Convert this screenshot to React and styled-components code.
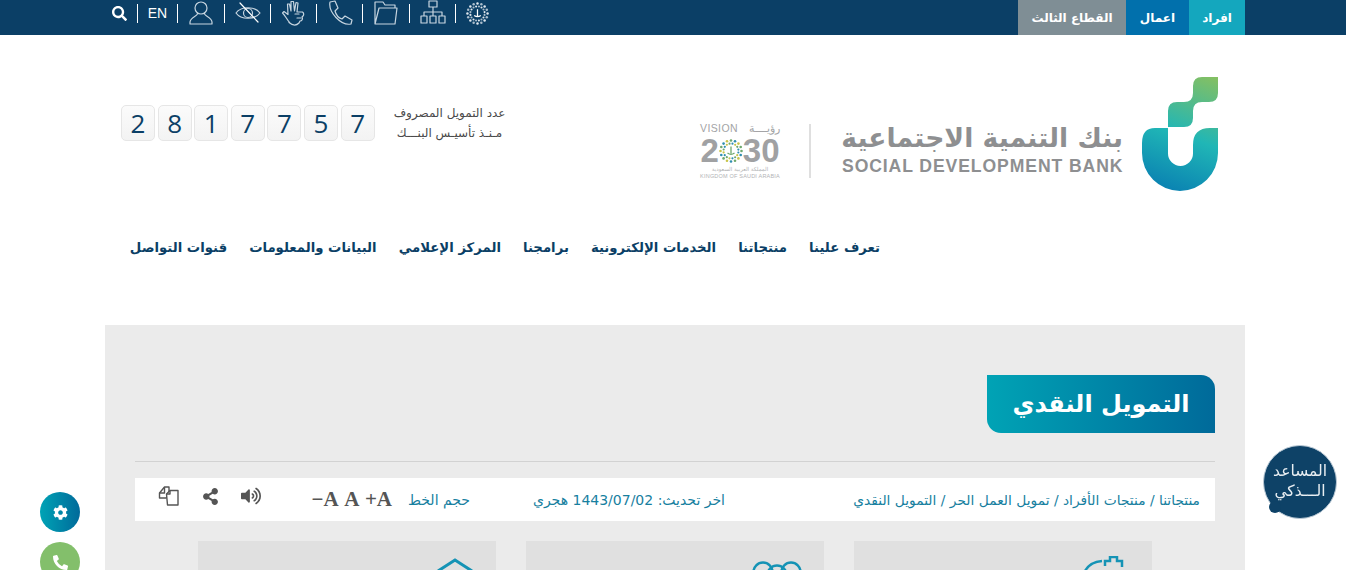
import React from "react";
import styled, { createGlobalStyle } from "styled-components";
import { FaSearch, FaCog, FaPhoneAlt, FaShareAlt, FaVolumeUp } from "react-icons/fa";

const AR = `"DejaVu Sans", "Noto Sans", sans-serif`;

const Global = createGlobalStyle`
	html, body {
		margin: 0;
		padding: 0;
		height: 100%;
		overflow: hidden;
		background: #fff;
		font-family: ${AR};
	}
	* { box-sizing: border-box; }
`;

const Page = styled.div`
	height: 570px;
	overflow: hidden;
`;

const Container = styled.div`
	width: 1140px;
	margin-left: 105px;
`;

const TopBar = styled.div`
	height: 35px;
	background: #0b3f66;
`;

const TopInner = styled(Container)`
	display: flex;
	justify-content: space-between;
	direction: ltr;
	height: 35px;
`;

const Tools = styled.div`
	display: flex;
	align-items: flex-start;
`;

const Tool = styled.div`
	display: flex;
	align-items: center;
	justify-content: center;
	height: 26px;
	width: ${(p) => p.$w}px;
	color: #fff;
	font-family: "Liberation Sans", sans-serif;
	font-size: 14px;
	padding-right: ${(p) => p.$shift || 0}px;
	& > svg { display: block; }
`;

const Sep = styled.div`
	width: 1px;
	height: 19px;
	margin-top: 4px;
	background: #fff;
`;

const Tabs = styled.div`
	display: flex;
	flex-direction: row-reverse;
	height: 35px;
`;

const Tab = styled.div`
	display: flex;
	align-items: center;
	justify-content: center;
	width: ${(p) => p.$w}px;
	background: ${(p) => p.$bg};
	color: #fff;
	font-size: 12px;
	font-weight: 700;
	direction: rtl;
`;

const Brand = styled(Container)`
	display: flex;
	flex-direction: row-reverse;
	justify-content: space-between;
	align-items: flex-start;
	height: 190px;
	padding: 42px 27px 0 16px;
`;

const LogoBlock = styled.div`
	display: flex;
	flex-direction: row-reverse;
	align-items: flex-start;
`;

const LogoText = styled.div`
	width: 281px;
	margin: 44px 19px 0 0;
	color: #8e8f91;
	text-align: right;
`;

const LogoArabic = styled.div`
	direction: rtl;
	font-size: 26.6px;
	line-height: 34px;
	white-space: nowrap;
	font-weight: 700;
`;

const LogoLatin = styled.div`
	font-family: "Liberation Sans", sans-serif;
	font-size: 17.6px;
	line-height: 19px;
	margin-top: 2px;
	font-weight: 700;
	letter-spacing: 0.9px;
	white-space: nowrap;
`;

const LogoDivider = styled.div`
	width: 2px;
	height: 54px;
	background: #dfdfdf;
	margin: 47px 31px 0 29px;
`;

const Vision = styled.div`
	width: 80px;
	margin-top: 45px;
	color: #a3a4a6;
	text-align: center;
`;

const VisionTop = styled.div`
	font-family: "Liberation Sans", sans-serif;
	display: flex;
	justify-content: space-between;
	font-size: 10.5px;
	line-height: 12px;
	margin-bottom: 3px;
	letter-spacing: 0.4px;
	white-space: nowrap;
`;

const VisionYear = styled.div`
	display: flex;
	justify-content: center;
	align-items: center;
	font-family: "Liberation Sans", sans-serif;
	font-size: 33px;
	line-height: 28px;
	font-weight: 700;
	color: #a0a1a3;
	margin-bottom: 1px;
`;

const VisionSmall = styled.div`
	font-size: 5.5px;
	line-height: 6.5px;
	white-space: nowrap;
	font-family: ${(p) => (p.$latin ? `"Liberation Sans", sans-serif` : AR)};
	letter-spacing: ${(p) => (p.$latin ? 0.2 : 0.3)}px;
	color: #b2b3b5;
`;

const Counter = styled.div`
	display: flex;
	flex-direction: row-reverse;
	align-items: center;
	margin-top: 26px;
`;

const CounterLabel = styled.div`
	direction: rtl;
	text-align: center;
	width: 114px;
	font-size: 12px;
	line-height: 20px;
	color: #4a4a4a;
	margin-left: 18px;
	white-space: nowrap;
`;

const Digits = styled.div`
	display: flex;
	gap: 2.6px;
`;

const Digit = styled.div`
	width: 34px;
	height: 36px;
	display: flex;
	align-items: center;
	justify-content: center;
	border: 1px solid #e6e6e6;
	border-radius: 5px;
	background: linear-gradient(#fbfbfb, #f3f3f3);
	color: #0b3f66;
	font-family: "Open Sans", sans-serif;
	font-size: 26px;
`;

const Nav = styled(Container)`
	direction: rtl;
	display: flex;
	gap: 22px;
	height: 100px;
	padding: 13px 365px 0 0;
	white-space: nowrap;
`;

const NavItem = styled.a`
	color: #0b3f66;
	font-size: 13.25px;
	font-weight: 700;
	line-height: 20px;
`;

const Panel = styled(Container)`
	background: #ebebeb;
	height: 300px;
	padding: 50px 30px 0;
	direction: rtl;
`;

const Title = styled.h1`
	margin: 0;
	width: 228px;
	height: 58px;
	display: flex;
	align-items: center;
	justify-content: center;
	border-radius: 0 14px 0 14px;
	background: linear-gradient(90deg, #00a3b5, #006a9a);
	color: #fff;
	font-size: 24px;
	font-weight: 700;
`;

const Rule = styled.div`
	height: 1px;
	background: #d2d2d2;
	margin-top: 28px;
`;

const InfoBar = styled.div`
	display: grid;
	grid-template-columns: 475px 255px 1fr;
	align-items: center;
	height: 43px;
	margin-top: 16px;
	background: #fff;
	padding: 0 15px;
	color: #17809f;
	font-size: 13.8px;
	white-space: nowrap;
`;

const Crumbs = styled.div`
	letter-spacing: -0.1px;
`;

const Updated = styled.div`
	color: #17809f;
	font-size: 14px;
`;

const Controls = styled.div`
	display: flex;
	align-items: center;
	color: #555;
`;

const FontLabel = styled.span`
	color: #17809f;
	margin-left: 16px;
	font-size: 14px;
`;

const FontSizes = styled.div`
	display: flex;
	direction: ltr;
	gap: 5.5px;
	font-family: "Liberation Serif", serif;
	font-weight: 700;
	font-size: 21px;
	color: #555;
	margin-left: 40px;
`;

const IconRow = styled.div`
	display: grid;
	direction: ltr;
	grid-template-columns: repeat(3, 41px);
	justify-items: center;
	align-items: center;
	margin-top: -7px;
`;

const Cards = styled.div`
	display: flex;
	gap: 30px;
	padding-right: 63px;
	margin-top: 20px;
`;

const Card = styled.div`
	width: 298px;
	height: 120px;
	background: #e0e0e0;
	display: flex;
	justify-content: flex-end;
	direction: ltr;
	padding-top: ${(p) => p.$top}px;
	padding-right: ${(p) => p.$right}px;
`;

const Floating = styled.div`
	position: fixed;
	left: 40px;
	top: ${(p) => p.$top}px;
	width: 40px;
	height: 40px;
	border-radius: 50%;
	background: ${(p) => p.$bg};
	display: flex;
	align-items: center;
	justify-content: center;
	color: #fff;
	font-size: 15px;
`;

const Assistant = styled.div`
	position: fixed;
	left: 1263px;
	top: 445px;
	width: 74px;
	height: 74px;
	border-radius: 50%;
	background: #0e4267;
	border: 1px solid #b9c8d4;
	color: #e8eef2;
	direction: rtl;
	text-align: center;
	font-size: 15.5px;
	line-height: 20px;
	padding-top: 15px;
	white-space: nowrap;
	&::after {
		content: "";
		position: absolute;
		left: 5px;
		bottom: 5px;
		width: 12px;
		height: 12px;
		border-radius: 50%;
		background: #0e4267;
	}
`;

const Mark = () => (
	<svg width="76" height="114" viewBox="0 0 76 114">
		<defs>
			<linearGradient id="mk" gradientUnits="userSpaceOnUse" x1="76" y1="0" x2="34" y2="114">
				<stop offset="0" stopColor="#86c061" />
				<stop offset="0.55" stopColor="#20b6b6" />
				<stop offset="1" stopColor="#0b84b2" />
			</linearGradient>
		</defs>
		<path
			fill="url(#mk)"
			d="M60 0H76V16Q76 25 67 25H60Q51 25 51 34V41Q51 50 42 50H26V34Q26 25 35 25H42Q51 25 51 16V9Q51 0 60 0Z"
		/>
		<path
			fill="url(#mk)"
			d="M26 51H13Q0 51 0 66V76A38 38 0 0 0 76 76V51H68Q51 51 51 68V76.500A12.500 12.500 0 0 1 26 76.500Z"
		/>
	</svg>
);

// ring of small dots, the national emblem in the bar and the 0 of 2030
const Star = ({ size, colors, emblem }) => {
	const dots = [];
	for (let i = 0; i < 16; i++) {
		const a = (i / 16) * Math.PI * 2;
		dots.push(
			<circle
				key={i}
				cx={12 + Math.cos(a) * 10.5}
				cy={12 + Math.sin(a) * 10.5}
				r="1.3"
				fill={colors[i % colors.length]}
			/>,
			<circle
				key={"in" + i}
				cx={12 + Math.cos(a + 0.2) * 7.5}
				cy={12 + Math.sin(a + 0.2) * 7.5}
				r="1.1"
				fill={colors[(i + 1) % colors.length]}
			/>
		);
	}
	return (
		<svg width={size} height={size} viewBox="0 0 24 24">
			{dots}
			<path d="M12 7.500v7M8.500 14c2 1.500 5 1.500 7 0" fill="none" stroke={emblem} strokeWidth="1.300" />
		</svg>
	);
};

const Line = ({ children }) => (
	<svg width="26" height="26" viewBox="0 0 26 26" fill="none" stroke="#c7d5e0" strokeWidth="1.2" strokeLinejoin="round" strokeLinecap="round">
		{children}
	</svg>
);

const Copies = () => (
	<svg width="22" height="22" viewBox="0 0 22 22" fill="#fff" stroke="#555" strokeWidth="1.4" strokeLinejoin="round">
		<path d="M1.500 8 6.500 2H11v8l-3 3H1.500z" />
		<path d="M8.500 9 12 5.500h8V20H9.500z" />
		<path d="M12 5.500V9H8.500M6.500 2v6h-5" fill="none" />
	</svg>
);

const tools = [
	{ w: 32, shift: 4, icon: <FaSearch size={15} /> },
	{ w: 39, text: "EN" },
	{ w: 46, icon: <Line><circle cx="13" cy="8" r="6" /><path d="M9.500 13c1 3-7 4-7.500 9v2h22v-2c-.5-5-8.500-6-7.500-9" /></Line> },
	{ w: 45, icon: <Line><path d="M1 13c5-7 19-7 24 0-5 7-19 7-24 0z" /><circle cx="13" cy="13" r="4.500" /><path d="M5 3l18 19" stroke="#fff" /></Line> },
	{ w: 45, icon: <Line><path d="M9 23C6 20 4 15 1.500 13l1.500-1.500 4 3L6.500 4h2l1.500 7V1.500h2.500l1 9.500 1.500-8.500 2 .5-1 9 5.500 0c1.500 1 1.500 3 .5 4l-1 1c1 2 0 4-2 4l-1 2c-3 3-7 2-10-.5z" /><path d="M14 14h4M16 18h4" /></Line> },
	{ w: 45, icon: <Line><path d="M3 2 8 1l3 7-3 3c1 4 4 7 7 8l3-3 7 4-1 4c-10 2-23-12-21-22z" /></Line> },
	{ w: 46, icon: <Line><path d="M2 24V2h8l2 3h10v3M2 24h20l2-16H6L2 24z" /></Line> },
	{ w: 45, icon: <Line><path d="M9 1h8v6H9zM13 7v5M4 16v-4h18v4M13 12v4M1 16h6v7H1zM10 16h6v7h-6zM19 16h6v7h-6z" /></Line> },
	{ w: 46, shift: 3, icon: <Star size={23} colors={["#dfe7ee", "#a9bccb"]} emblem="#fff" /> },
];

const nav = [
	"تعرف علينا",
	"منتجاتنا",
	"الخدمات الإلكترونية",
	"برامجنا",
	"المركز الإعلامي",
	"البيانات والمعلومات",
	"قنوات التواصل",
];

const App = () => {
	return (
		<Page>
			<Global />
			<TopBar>
				<TopInner>
					<Tools>
						{tools.map((t, i) => (
							<React.Fragment key={i}>
								<Tool $w={t.w} $shift={t.shift}>
									{t.icon || t.text}
								</Tool>
								{i < tools.length - 1 && <Sep />}
							</React.Fragment>
						))}
					</Tools>
					<Tabs>
						<Tab $w={56} $bg="#14a7be">افراد</Tab>
						<Tab $w={63} $bg="#0170ac">اعمال</Tab>
						<Tab $w={108} $bg="#7f8e95">القطاع الثالث</Tab>
					</Tabs>
				</TopInner>
			</TopBar>

			<Brand>
				<LogoBlock>
					<Mark />
					<LogoText>
						<LogoArabic>بنك التنمية الاجتماعية</LogoArabic>
						<LogoLatin>SOCIAL DEVELOPMENT BANK</LogoLatin>
					</LogoText>
					<LogoDivider />
					<Vision>
						<VisionTop>
							<span>VISION</span>
							<span>رؤيــــة</span>
						</VisionTop>
						<VisionYear>
							2
							<Star size={24} colors={["#6fa86c", "#2f8fb0", "#c8c44a"]} emblem="#6fa86c" />
							30
						</VisionYear>
						<VisionSmall>المملكة العربية السعودية</VisionSmall>
						<VisionSmall $latin>KINGDOM OF SAUDI ARABIA</VisionSmall>
					</Vision>
				</LogoBlock>
				<Counter>
					<CounterLabel>
						عدد التمويل المصروف
						<br />
						مـنـذ تأسيـس البنـــك
					</CounterLabel>
					<Digits>
						{[2, 8, 1, 7, 7, 5, 7].map((d, i) => (
							<Digit key={i}>{d}</Digit>
						))}
					</Digits>
				</Counter>
			</Brand>

			<Nav>
				{nav.map((n) => (
					<NavItem key={n}>{n}</NavItem>
				))}
			</Nav>

			<Panel>
				<Title>التمويل النقدي</Title>
				<Rule />
				<InfoBar>
					<Crumbs>منتجاتنا / منتجات الأفراد / تمويل العمل الحر / التمويل النقدي</Crumbs>
					<Updated>اخر تحديث: 1443/07/02 هجري</Updated>
					<Controls>
						<FontLabel>حجم الخط</FontLabel>
						<FontSizes>
							<span>−A</span>
							<span>A</span>
							<span>+A</span>
						</FontSizes>
						<IconRow>
							<Copies />
							<FaShareAlt size={17} />
							<FaVolumeUp size={20} />
						</IconRow>
					</Controls>
				</InfoBar>
				<Cards>
					<Card $top={15} $right={22}>
						<svg width="46" height="16" viewBox="0 0 46 16" fill="none" stroke="#1593b5" strokeWidth="2.500">
							<path d="M1 15Q6 6 18 5M21 10V5h5V1h7v4h5v6" />
						</svg>
					</Card>
					<Card $top={20} $right={22}>
						<svg width="50" height="12" viewBox="0 0 50 12" fill="none" stroke="#1593b5" strokeWidth="2.500">
							<circle cx="11" cy="11" r="9.500" />
							<circle cx="25" cy="14" r="9.500" />
							<circle cx="39" cy="11" r="9.500" />
						</svg>
					</Card>
					<Card $top={17} $right={23}>
						<svg width="36" height="14" viewBox="0 0 36 14" fill="none" stroke="#1593b5" strokeWidth="3">
							<path d="M1 13 18 2l17 11" />
						</svg>
					</Card>
				</Cards>
			</Panel>

			<Floating $top={492} $bg="linear-gradient(90deg, #00a3b5, #006a9a)">
				<FaCog />
			</Floating>
			<Floating $top={542} $bg="#83bf6b">
				<FaPhoneAlt />
			</Floating>
			<Assistant>
				المساعد
				<br />
				الـــذكي
			</Assistant>
		</Page>
	);
};

export default App;
